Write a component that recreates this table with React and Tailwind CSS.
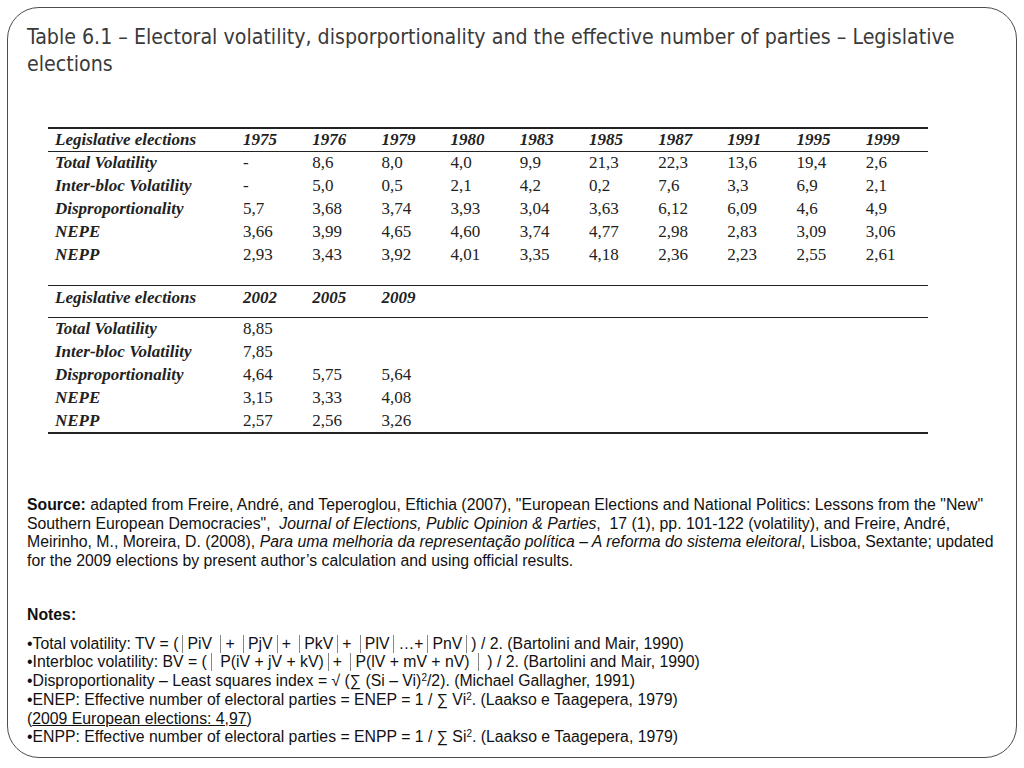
import React from "react";

const years1 = ["1975", "1976", "1979", "1980", "1983", "1985", "1987", "1991", "1995", "1999"];
const rows1 = [
  ["Total Volatility", "-", "8,6", "8,0", "4,0", "9,9", "21,3", "22,3", "13,6", "19,4", "2,6"],
  ["Inter-bloc Volatility", "-", "5,0", "0,5", "2,1", "4,2", "0,2", "7,6", "3,3", "6,9", "2,1"],
  ["Disproportionality", "5,7", "3,68", "3,74", "3,93", "3,04", "3,63", "6,12", "6,09", "4,6", "4,9"],
  ["NEPE", "3,66", "3,99", "4,65", "4,60", "3,74", "4,77", "2,98", "2,83", "3,09", "3,06"],
  ["NEPP", "2,93", "3,43", "3,92", "4,01", "3,35", "4,18", "2,36", "2,23", "2,55", "2,61"],
];
const years2 = ["2002", "2005", "2009", "", "", "", "", "", "", ""];
const rows2 = [
  ["Total Volatility", "8,85", "", ""],
  ["Inter-bloc Volatility", "7,85", "", ""],
  ["Disproportionality", "4,64", "5,75", "5,64"],
  ["NEPE", "3,15", "3,33", "4,08"],
  ["NEPP", "2,57", "2,56", "3,26"],
];

const Cols = () => (
  <colgroup>
    <col className="w-[188px]" />
    {years1.map((y) => (
      <col key={y} className="w-[69.2px]" />
    ))}
  </colgroup>
);

const Bar = ({ h = "h-[18px]" }) => (
  <span className={`inline-block w-px ${h} bg-[#888] align-[-4px] mx-[4px]`}></span>
);

// header row height differs between the two blocks
const DataTable = ({ years, rows, headH, headCell }) => (
  <table className="table-fixed w-[880px] border-collapse">
    <Cols />
    <thead>
      <tr className={`${headH} border-b border-[#222]`}>
        <th className={`text-left font-bold italic pl-[7px] ${headCell}`}>Legislative elections</th>
        {years.map((y, i) => (
          <th key={i} className={`text-left font-bold italic pl-[7px] ${headCell}`}>{y}</th>
        ))}
      </tr>
    </thead>
    <tbody>
      {rows.map((r) => (
        <tr key={r[0]} className="h-[23px]">
          <td className="pl-[7px] p-0 font-bold italic">{r[0]}</td>
          {years.map((_, i) => (
            <td key={i} className="pl-[7px] p-0">{r[i + 1] || ""}</td>
          ))}
        </tr>
      ))}
    </tbody>
  </table>
);

export default function App() {
  return (
    <div className="w-[1024px] h-[768px] bg-white pt-[7px] pl-[7px]">
      <div className="w-[1010px] h-[751px] border border-[#4d4d4d] rounded-[32px] pl-[19px] pt-[15px]">
        <h1
          className="text-[21.2px] leading-[27px] text-[#3a3a3a] w-[975px]"
          style={{ fontFamily: '"DejaVu Sans Condensed", "Liberation Sans", sans-serif', fontStretch: "condensed" }}
        >
          Table 6.1 – Electoral volatility, disporportionality and the effective number of parties – Legislative
          <br />
          elections
        </h1>

        <div className="ml-[21px] mt-[50px] text-[17px] leading-[20px] text-[#222]" style={{ fontFamily: '"Liberation Serif", serif' }}>
          <div className="border-t-2 border-[#222] w-[880px]">
            <DataTable years={years1} rows={rows1} headH="h-[22px]" headCell="align-middle" />
          </div>
          <div className="mt-[19px] border-t border-[#222] border-b-2 w-[880px]">
            <DataTable years={years2} rows={rows2} headH="h-[31px]" headCell="align-top pt-[2px]" />
          </div>
        </div>

        <div
          className="mt-[62px] text-[15.8px] leading-[18.5px] text-[#111] w-[985px]"
          style={{ fontFamily: '"Liberation Sans", Arial, sans-serif' }}
        >
          <p>
            <b>Source:</b> adapted from Freire, André, and Teperoglou, Eftichia (2007), "European Elections and National Politics: Lessons from the "New"
            <br />
            Southern European Democracies",&nbsp; <i>Journal of Elections, Public Opinion &amp; Parties</i>,&nbsp; 17 (1), pp. 101-122 (volatility), and Freire, André,
            <br />
            Meirinho, M., Moreira, D. (2008), <i>Para uma melhoria da representação política – A reforma do sistema eleitoral</i>, Lisboa, Sextante; updated
            <br />
            for the 2009 elections by present author’s calculation and using official results.
          </p>

          <p className="mt-[36px] font-bold">Notes:</p>
          <div className="mt-[10px] leading-[18.8px]">
            <p>
              •Total volatility: TV = (<Bar />PiV <Bar />+ <Bar />PjV<Bar />+ <Bar />PkV<Bar />+ <Bar />PlV<Bar />…+<Bar />PnV<Bar />) / 2. (Bartolini and Mair, 1990)
            </p>
            <p>
              •Interbloc volatility: BV = (<Bar /> P(iV + jV + kV)<Bar />+ <Bar />P(lV + mV + nV) <Bar /> ) / 2. (Bartolini and Mair, 1990)
            </p>
            <p>
              •Disproportionality – Least squares index = √ (∑ (Si – Vi)<sup className="text-[10px]">2</sup>/2). (Michael Gallagher, 1991)
            </p>
            <p>
              •ENEP: Effective number of electoral parties = ENEP = 1 / ∑ Vi<sup className="text-[10px]">2</sup>. (Laakso e Taagepera, 1979)
            </p>
            <p>
              (<span className="underline">2009 European elections: 4,97</span>)
            </p>
            <p>
              •ENPP: Effective number of electoral parties = ENPP = 1 / ∑ Si<sup className="text-[10px]">2</sup>. (Laakso e Taagepera, 1979)
            </p>
          </div>
        </div>
      </div>
    </div>
  );
}
